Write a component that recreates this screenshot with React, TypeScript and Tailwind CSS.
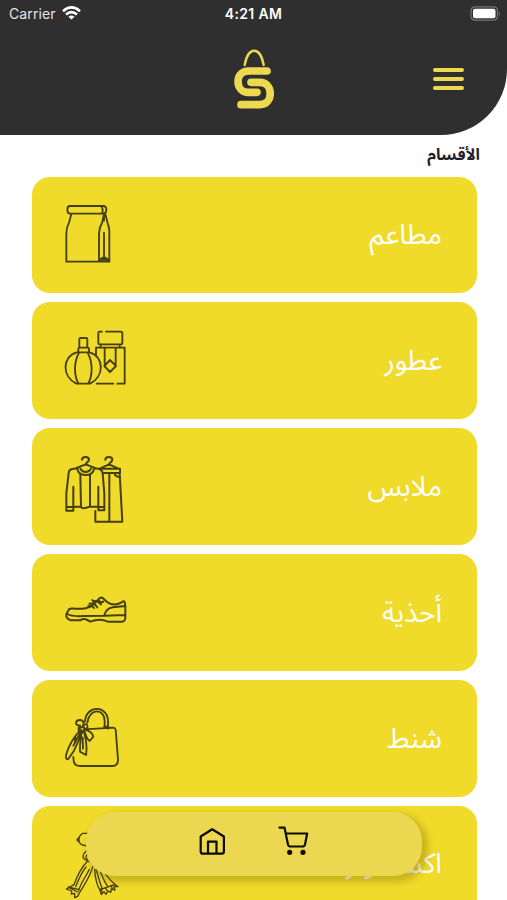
import type { ReactNode } from "react";

const ink = "#453f12";

function Icon({ children, dx = 0, dy = 0, w = 5.5 }: { children: ReactNode; dx?: number; dy?: number; w?: number }) {
  return (
    <svg
      className="ml-[18.5px] h-[117px] w-[100px] shrink-0"
      viewBox="0 0 300 351"
      fill="none"
      stroke={ink}
      strokeWidth={w}
      strokeLinecap="round"
      strokeLinejoin="round"
    >
      <g transform={`translate(${dx} ${dy + 2})`}>{children}</g>
    </svg>
  );
}

const BagIcon = () => (
  <Icon dy={39}>
    <path d="M60 46H160Q169 46 169 57T160 69H60Q52 68 52 57T60 46ZM154 47Q161 57 156 68M64 70 57 96Q49 110 49 128V213H178V120Q177 108 173 98L166 70M162 70 157 94Q147 112 147 130V212M162 70V90M162 126V199M147 211Q162 190 177 211M156 210Q162 202 168 210" />
  </Icon>
);

const PerfumeIcon = () => (
  <Icon dy={37}>
    <path d="M156 50H148Q145 50 145 54V84Q145 88 149 88H212Q217 88 217 83V54Q217 50 212 50H168M152 89V97M209 89V97M138 124V98H224V206H202M190 206H140M164 99V147M197 99V147M180 135 198 153 180 171 163 153ZM88 98V72Q88 69 92 69H108Q112 69 112 72V98M85 112V102Q85 98 89 98H113Q117 98 117 102V112M80 112C36 124 35 185 79 206H120C164 185 163 124 119 112ZM87 113C72 140 71 180 85 205M113 113C128 140 129 180 115 205" />
  </Icon>
);

const ClothesIcon = () => (
  <Icon dy={50} w={6}>
    <path d="M96 43C96 32 117 32 117 43C117 51 107 50 107 59M107 57 76 69M107 57 138 69M166 43C166 32 187 32 187 43C187 51 177 50 177 59M177 57 151 69M177 57 204 69M80 69 64 72Q57 74 56 83L49 145V196H70V124M70 184H93Q95 193 120 184H142M145 124V195H163V145L158 83Q156 72 146 70L132 69M49 185H69M146 185H162M82 69Q84 89 107 89Q130 89 132 69M91 70Q96 80 107 80Q118 80 123 70M91 86 93 184M120 87V184M150 70H210V83H157M209 84 217 229H136V197M178 84V228M194 84Q194 94 209 95" />
  </Icon>
);

const ShoeIcon = () => (
  <Icon dy={78} w={6}>
    <path d="M57 86 49 101Q47 108 53 114L62 119H91Q101 112 112 118L121 123Q144 114 162 119L174 123H217Q225 122 226 112V75L224 64Q220 59 215 65Q193 77 174 66L157 51Q150 50 145 56L124 77Q106 86 75 84Q62 82 57 86ZM52 100Q66 108 100 106L163 105 225 103M163 103Q169 83 188 80L225 76M118 69Q133 66 142 80M130 61Q143 59 153 71M127 58 137 74M114 77Q125 72 132 82M145 57Q151 68 160 63" />
  </Icon>
);

const HandbagIcon = () => (
  <Icon dy={44}>
    <path d="M102 102 190 97Q195 97 197 103L204 192Q205 211 188 212H91Q72 212 71 196L70 185M74 145 77 121M105 78C108 28 174 29 174 78V98M112 82C117 37 165 38 164 78V98M162 94H175V100M91 91C70 90 78 73 91 74C104 76 102 88 97 95M99 91Q114 79 112 98L101 105M86 96H103V110H86ZM88 108Q61 137 50 173Q44 192 54 192L72 166 83 142 96 112M94 113 90 151 90 169 108 179Q113 151 103 112M104 109Q110 131 119 137L130 124Q128 111 106 103M86 98 97 108M90 114 70 151M98 126 99 160" />
  </Icon>
);

const ScarfIcon = () => (
  <Icon dx={-90} dy={-48} w={4}>
    <path d="M203 131H188Q176 138 177 151 177 162 188 166L207 170M176 144 171 151 177 157M199 184Q183 198 193 208L206 216M203 194Q193 202 202 209M201 216C181 236 171 260 162 285L139 298 155 304 154 313 164 311 164 324 173 320C188 288 208 271 218 231M198 232C183 248 176 272 167 291M208 239C198 262 183 276 176 303M149 295 173 307M145 292 177 300M224 239Q226 279 240 302L244 315 252 306 258 314 264 304 272 308 274 298 285 301 282 290 294 291Q265 270 252 244M229 241Q237 271 247 299M241 246Q254 278 263 290M240 300 286 284M246 307 243 297M262 304 256 294M278 297 272 288" />
  </Icon>
);

const categories = [
  { name: "مطاعم", icon: <BagIcon /> },
  { name: "عطور", icon: <PerfumeIcon /> },
  { name: "ملابس", icon: <ClothesIcon /> },
  { name: "أحذية", icon: <ShoeIcon /> },
  { name: "شنط", icon: <HandbagIcon /> },
  { name: "اكسسوارات", icon: <ScarfIcon /> },
];

function StatusBar() {
  return (
    <div className="grid h-7 grid-cols-3 items-center pl-[9px] pr-[6px] font-['Inter','Liberation_Sans',sans-serif] text-sm text-[#e5e5e5]">
      <div className="flex items-center gap-[6px]">
        <span className="text-[14px] tracking-[0.1px]">Carrier</span>
        <svg className="-mt-[2px] h-[14px] w-[19px]" viewBox="0 0 19 14" fill="none" stroke="white" strokeWidth="2.6">
          <path d="M1 5.2Q9.500-2.400 18 5.200M4 8.500Q9.500 3.700 15 8.500" />
          <path d="M9.500 13.500 6.400 10.700Q9.500 8.200 12.600 10.700Z" fill="white" stroke="none" />
        </svg>
      </div>
      <span className="mr-[3px] text-center text-[14px] font-semibold tracking-[0.35px] text-white">4:21 AM</span>
      <svg className="-mt-[2px] h-[15px] w-[31px] justify-self-end" viewBox="0 0 31 15">
        <rect x="1" y=".8" width="26.500" height="13.400" rx="4" fill="none" stroke="#777" strokeWidth="1.200" />
        <rect x="3" y="2.800" width="22.500" height="9.400" rx="2" fill="white" />
        <path d="M29 5.200Q31 7.500 29 9.800Z" fill="#777" />
      </svg>
    </div>
  );
}

export default function App() {
  return (
    <div className="relative h-[900px] w-[507px] overflow-hidden bg-white font-['Noto_Sans_Arabic','DejaVu_Sans',sans-serif]">
      <header className="h-[135px] rounded-br-[66px] bg-[#2f2f2f]">
        <StatusBar />
        <div className="grid grid-cols-3 items-center pt-[12px]">
          <span />
          <svg className="ml-[3px] h-[70px] w-[70px] justify-self-center" viewBox="0 0 210 210" fill="none" stroke="#ecd94f" strokeLinecap="round">
            <path d="M74 75C84 18 121 18 131 75" strokeWidth="7" />
            <path d="M141 93H85C44 93 44 157 85 157H111M93 127H120C161 127 161 194 120 194H63" strokeWidth="23" />
          </svg>
          <button aria-label="menu" className="mr-[43px] mt-[8px] flex flex-col gap-[5px] justify-self-end">
            <i className="h-[3.700px] w-[31px] rounded-full bg-[#ecd94f]" />
            <i className="h-[3.700px] w-[31px] rounded-full bg-[#ecd94f]" />
            <i className="h-[3.700px] w-[31px] rounded-full bg-[#ecd94f]" />
          </button>
        </div>
      </header>

      <h1 dir="rtl" className="h-[41.600px] pr-[27px] pt-2 text-[16px] font-bold leading-6 text-[#202026]">
        الأقسام
      </h1>

      <main className="flex flex-col gap-[9px] pl-[31.500px] pr-[30.500px]">
        {categories.map((c) => (
          <section key={c.name} className="flex h-[116.800px] shrink-0 items-center justify-between rounded-[18px] bg-[#f0da2a] pr-[34.500px]">
            {c.icon}
            <span dir="rtl" className="pt-[3px] text-[28px] text-white">{c.name}</span>
          </section>
        ))}
      </main>

      <nav className="absolute left-[86px] top-[812px] flex h-16 w-[336px] items-center rounded-[29px] bg-[#ebd850] shadow-[4px_4px_6px_2px_rgba(120,100,0,0.32)]">
        <svg className="ml-[111px] h-[31px] w-[31px]" viewBox="0 0 31 31" fill="none" stroke="#0b0b05" strokeWidth="2.200" strokeLinejoin="round" transform="translate(0 -3)">
          <path d="M3.700 10.500 15.200 3.300 26.900 10.500V25.500Q26.900 27.700 24.700 27.700H5.900Q3.700 27.700 3.700 25.500ZM11 27.700V15.600H19.500V27.700" />
        </svg>
        <svg className="ml-[50px] h-[31px] w-[31px]" viewBox="0 0 31 31" fill="none" stroke="#0b0b05" strokeWidth="2.200" strokeLinecap="round" strokeLinejoin="round" transform="translate(0 -4)">
          <path d="M1.500 2.600H6.500L10 19.500Q10.500 21.500 12.500 21.500H24.500Q26.500 21.500 27 19.500L29.200 8.500H8" />
          <circle cx="11.700" cy="27.300" r="1.500" fill="#0b0b05" />
          <circle cx="25" cy="27.300" r="1.500" fill="#0b0b05" />
        </svg>
      </nav>
    </div>
  );
}
